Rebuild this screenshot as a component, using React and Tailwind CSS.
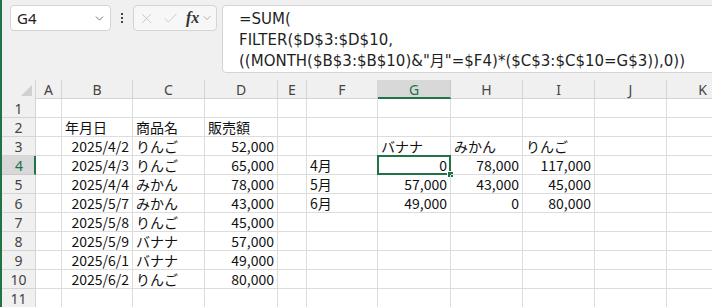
import { ChevronDown, X, Check } from "lucide-react";

const cols = [
  { key: "A", w: "w-[26px]" },
  { key: "B", w: "w-[71px]" },
  { key: "C", w: "w-[72px]" },
  { key: "D", w: "w-[73px]" },
  { key: "E", w: "w-[29px]" },
  { key: "F", w: "w-[71px]" },
  { key: "G", w: "w-[73px]" },
  { key: "H", w: "w-[72px]" },
  { key: "I", w: "w-[72px]" },
  { key: "J", w: "w-[72px]" },
  { key: "K", w: "w-[72px]" },
];

// [value, align] per column letter
const rows = {
  1: {},
  2: { B: ["年月日"], C: ["商品名"], D: ["販売額"] },
  3: { B: ["2025/4/2", "r"], C: ["りんご"], D: ["52,000", "r"], G: ["バナナ"], H: ["みかん"], I: ["りんご"] },
  4: { B: ["2025/4/3", "r"], C: ["りんご"], D: ["65,000", "r"], F: ["4月"], G: ["0", "r"], H: ["78,000", "r"], I: ["117,000", "r"] },
  5: { B: ["2025/4/4", "r"], C: ["みかん"], D: ["78,000", "r"], F: ["5月"], G: ["57,000", "r"], H: ["43,000", "r"], I: ["45,000", "r"] },
  6: { B: ["2025/5/7", "r"], C: ["みかん"], D: ["43,000", "r"], F: ["6月"], G: ["49,000", "r"], H: ["0", "r"], I: ["80,000", "r"] },
  7: { B: ["2025/5/8", "r"], C: ["りんご"], D: ["45,000", "r"] },
  8: { B: ["2025/5/9", "r"], C: ["バナナ"], D: ["57,000", "r"] },
  9: { B: ["2025/6/1", "r"], C: ["バナナ"], D: ["49,000", "r"] },
  10: { B: ["2025/6/2", "r"], C: ["りんご"], D: ["80,000", "r"] },
  11: {},
};

const cellFont = { fontFamily: '"Noto Sans CJK JP", "Noto Sans", sans-serif' };

function FormulaBar() {
  return (
    <div className="flex h-[80px] items-start bg-[#f0f0f0] pl-[8px] pt-[5px]">
      <div className="flex h-[26px] w-[101px] shrink-0 items-center justify-between rounded-[4px] border border-[#d4d4d4] bg-white pl-[6px] pr-[4px]">
        <span className="text-[15px] text-[#222]" style={{ fontFamily: '"Noto Sans", sans-serif' }}>G4</span>
        <ChevronDown className="h-[13px] w-[13px] text-[#555]" strokeWidth={1.5} />
      </div>
      <div className="flex h-[26px] w-[22px] shrink-0 flex-col items-center justify-center gap-[2px]">
        <span className="h-[2px] w-[2px] bg-[#444]" />
        <span className="h-[2px] w-[2px] bg-[#444]" />
        <span className="h-[2px] w-[2px] bg-[#444]" />
      </div>
      <div className="flex h-[26px] w-[84px] shrink-0 items-center rounded-[4px] border border-[#d4d4d4] bg-[#f7f7f7] pl-[4px]">
        <X className="h-[17px] w-[17px] text-[#c2c2c2]" strokeWidth={1.2} />
        <Check className="ml-[7px] h-[17px] w-[17px] text-[#c2c2c2]" strokeWidth={1.2} />
        <span
          className="ml-[7px] text-[16px] font-bold italic leading-none text-[#333]"
          style={{ fontFamily: '"Liberation Serif", serif' }}
        >
          fx
        </span>
        <ChevronDown className="ml-[2px] h-[12px] w-[12px] text-[#999]" strokeWidth={1.5} />
      </div>
      <div
        className="-mr-[20px] ml-[5px] h-[68px] flex-1 whitespace-nowrap rounded-[4px] border border-[#d4d4d4] bg-white pl-[16px] pt-[3px] text-[15px] leading-[21px] text-[#1f1f1f]"
        style={{ fontFamily: '"DejaVu Sans", "Noto Sans CJK JP", sans-serif' }}
      >
        <div>=SUM(</div>
        <div>FILTER($D$3:$D$10,</div>
        <div>((MONTH($B$3:$B$10)&amp;"月"=$F4)*($C$3:$C$10=G$3)),0))</div>
      </div>
    </div>
  );
}

function HeaderRow() {
  return (
    <div className="flex h-[19px] bg-[#f0f0f0]" style={{ fontFamily: '"Noto Sans", sans-serif' }}>
      <div className="relative h-[19px] w-[34px] shrink-0 border-r border-[#d4d4d4]">
        <svg className="absolute bottom-[3px] right-[3px]" width="11" height="11" viewBox="0 0 11 11">
          <path d="M11 0 L11 11 L0 11 Z" fill="#d0d0d0" />
        </svg>
      </div>
      {cols.map((c) =>
        c.key === "G" ? (
          <div
            key={c.key}
            className={`${c.w} flex h-[19px] shrink-0 items-center justify-center border-b-2 border-r border-[#217346] border-r-[#c8c8c8] bg-[#d8d8d8] pt-[2px] text-[14px] text-[#217346]`}
          >
            {c.key}
          </div>
        ) : (
          <div
            key={c.key}
            className={`${c.w} flex h-[19px] shrink-0 items-center justify-center border-b border-r border-[#d4d4d4] text-[14px] text-[#444]`}
          >
            {c.key}
          </div>
        )
      )}
    </div>
  );
}

function SheetRow({ n }) {
  const data = rows[n];
  const active = n === 4;
  return (
    <div className="flex h-[19px]">
      <div
        className={`flex h-[19px] w-[34px] shrink-0 items-center justify-center border-b text-[14px] ${
          active
            ? "border-r-2 border-b-[#c8c8c8] border-r-[#217346] bg-[#d8d8d8] pl-[2px] text-[#217346]"
            : "border-r border-[#d4d4d4] bg-[#f0f0f0] text-[#444]"
        }`}
        style={{ fontFamily: '"Noto Sans", sans-serif' }}
      >
        {n}
      </div>
      {cols.map((c) => {
        const v = data[c.key];
        const sel = active && c.key === "G";
        return (
          <div
            key={c.key}
            className={`${c.w} relative flex h-[19px] shrink-0 items-center border-b border-r border-[#dcdcdc] px-[3px] text-[14px] text-[#111] ${
              v && v[1] === "r" ? "justify-end" : "justify-start"
            }`}
            style={cellFont}
          >
            {v ? <span className="whitespace-nowrap leading-none">{v[0]}</span> : null}
            {sel && (
              <>
                <span className="absolute -left-[1px] -top-[1px] bottom-[-1px] right-[-1px] border-2 border-[#217346]" />
                <span className="absolute -bottom-[4px] -right-[4px] h-[7px] w-[7px] border border-white bg-[#217346]" />
              </>
            )}
          </div>
        );
      })}
    </div>
  );
}

export default function App() {
  return (
    <div className="h-[307px] w-[712px] overflow-hidden border-l-2 border-[#217346] bg-white">
      <FormulaBar />
      <HeaderRow />
      {Object.keys(rows).map((n) => (
        <SheetRow key={n} n={Number(n)} />
      ))}
    </div>
  );
}
